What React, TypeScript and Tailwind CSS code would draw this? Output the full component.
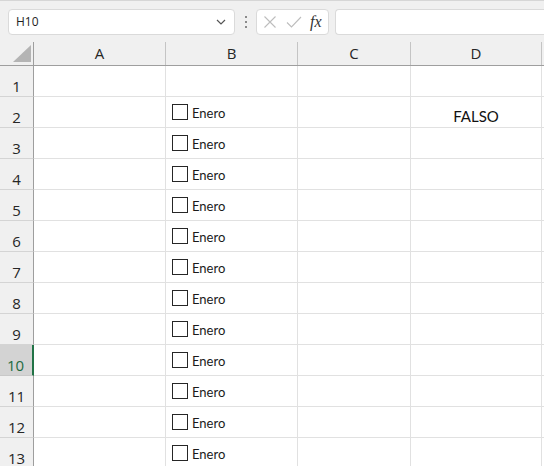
import React from 'react';

const cols = [
  { label: 'A', w: 'w-[132px]' },
  { label: 'B', w: 'w-[132px]' },
  { label: 'C', w: 'w-[113px]' },
  { label: 'D', w: 'w-[131px]' },
];

const rowNumbers = [1, 2, 3, 4, 5, 6, 7, 8, 9, 10, 11, 12, 13];
const selectedRow = 10;

const FormulaBar: React.FC = () => (
  <div className="h-[42px] bg-[#f0f0f0] border-t border-[#d6d6d6] flex items-start pt-[8px] pl-[8px] gap-0">
    {/* Name box */}
    <div className="w-[227px] h-[26px] bg-white border border-[#dadada] rounded-[4px] flex items-center pl-[7px] pr-[6px]">
      <span className="flex-1 text-[12px] text-[#1f1f1f] font-['Open_Sans',sans-serif]">H10</span>
      <svg width="12" height="8" viewBox="0 0 12 8" className="mr-[1px]">
        <path d="M2 2 L6 6 L10 2" fill="none" stroke="#555" strokeWidth="1.2" />
      </svg>
    </div>
    {/* Dots */}
    <div className="w-[21px] h-[26px] flex flex-col items-center justify-center gap-[3px]">
      <span className="w-[2px] h-[2px] bg-[#8a8a8a]" />
      <span className="w-[2px] h-[2px] bg-[#8a8a8a]" />
      <span className="w-[2px] h-[2px] bg-[#8a8a8a]" />
    </div>
    {/* Cancel / enter / fx */}
    <div className="w-[73px] h-[26px] bg-white border border-[#dadada] rounded-[4px] flex items-center pl-[4px]">
      <svg width="16" height="16" viewBox="0 0 16 16" className="ml-[1px]">
        <path d="M2.5 2.5 L13.5 13.5 M13.5 2.5 L2.5 13.5" stroke="#bdbdbd" strokeWidth="1.1" />
      </svg>
      <svg width="18" height="16" viewBox="0 0 18 16" className="ml-[7px]">
        <path d="M2 8.5 L6.5 13 L16 3" fill="none" stroke="#bdbdbd" strokeWidth="1.1" />
      </svg>
      <span className="ml-[7px] text-[16px] italic text-[#333] font-['Liberation_Serif',serif] leading-none">fx</span>
    </div>
    {/* Formula input */}
    <div className="ml-[6px] flex-1 h-[26px] bg-white border border-[#dadada] border-r-0 rounded-l-[4px]" />
  </div>
);

const Checkbox: React.FC = () => (
  <div className="flex items-start pl-[6px] pt-[7px]">
    <span className="w-[16px] h-[16px] border border-[#262626] bg-white" />
    <span className="ml-[4px] mt-[3px] text-[13px] text-[#1a1a1a] font-['Lato',sans-serif] leading-none">Enero</span>
  </div>
);

export default function App() {
  return (
    <div className="w-[544px] h-[466px] overflow-hidden bg-white font-['Open_Sans',sans-serif]">
      <FormulaBar />

      {/* Column headers */}
      <div className="flex h-[24px] bg-[#f0f0f0] border-b border-[#9e9e9e]">
        <div className="w-[34px] border-r border-[#9e9e9e] relative">
          <svg width="19" height="18" viewBox="0 0 19 18" className="absolute right-[1px] bottom-[2px]">
            <polygon points="18,0 18,17 0,17" fill="#b4b4b4" />
          </svg>
        </div>
        {cols.map((c) => (
          <div
            key={c.label}
            className={`${c.w} border-r border-[#c4c4c4] flex items-center justify-center text-[15px] text-[#262626]`}
          >
            {c.label}
          </div>
        ))}
        <div className="flex-1" />
      </div>

      {/* Rows */}
      {rowNumbers.map((n) => {
        const sel = n === selectedRow;
        return (
          <div key={n} className="flex h-[31px]">
            <div
              className={
                sel
                  ? 'w-[34px] bg-[#d3d3d3] border-b border-[#c8c8c8] border-r-2 border-r-[#217346] flex items-end justify-center text-[15px] text-[#1e6b41] leading-[20px] pr-[1px]'
                  : 'w-[34px] bg-[#f0f0f0] border-b border-[#d4d4d4] border-r border-r-[#9e9e9e] flex items-end justify-center text-[15px] text-[#262626] leading-[20px]'
              }
            >
              {n}
            </div>
            <div className="w-[132px] border-r border-b border-[#e1e1e1]" />
            <div className="w-[132px] border-r border-b border-[#e1e1e1]">
              {n >= 2 ? <Checkbox /> : null}
            </div>
            <div className="w-[113px] border-r border-b border-[#e1e1e1]" />
            <div className="w-[131px] border-r border-b border-[#e1e1e1] flex items-end justify-center pb-[2px]">
              {n === 2 ? (
                <span className="text-[15px] text-[#111] font-['Lato',sans-serif] leading-[18px]">FALSO</span>
              ) : null}
            </div>
            <div className="flex-1 border-b border-[#e1e1e1]" />
          </div>
        );
      })}
    </div>
  );
}
